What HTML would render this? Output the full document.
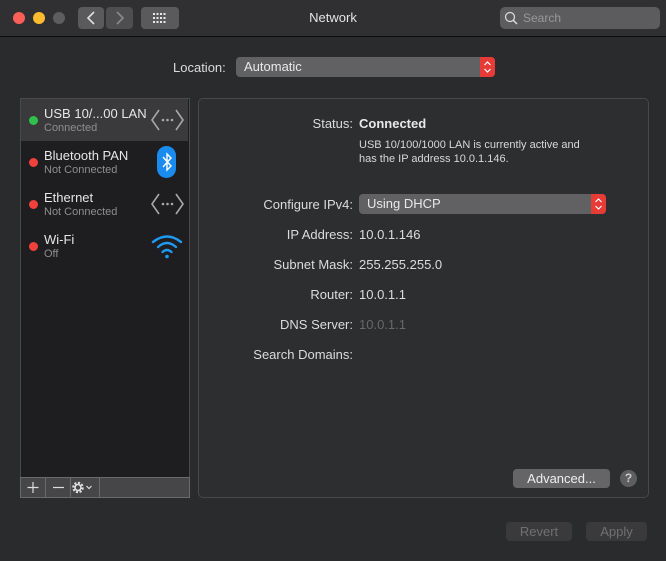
<!DOCTYPE html>
<html><head><style>
*{margin:0;padding:0;box-sizing:border-box}
body{width:666px;height:561px;background:#2a2b2d;font-family:"Liberation Sans",sans-serif;color:#dcdcdc;position:relative;overflow:hidden;font-size:13px}
.a{position:absolute}
.tb{left:0;top:0;width:666px;height:37px;background:#303032;border-bottom:1px solid #0c0c0c}
.dot{width:12px;height:12px;border-radius:50%;top:12px}
.btn{background:#5a5a5c;border-radius:4px}
.lbl{right:313px;text-align:right;white-space:nowrap}
.val{left:359px;white-space:nowrap}
.pop{background:#616163;border-radius:4px;height:20px;color:#e8e8e8;padding-left:8px;line-height:20px}
.pop .ar{position:absolute;right:0;top:0;width:15px;height:20px;background:#e63b36;border-radius:0 4px 4px 0}
.row{left:21px;width:167px;height:42px}
.sd{width:9px;height:9px;border-radius:50%;left:8px;top:17px}
.nm{left:23px;top:7px;font-size:13px;color:#e6e6e6}
.st{left:23px;top:23px;font-size:11px;color:#8e8e90}
</style></head><body>
<div class="a tb"></div>
<div class="a dot" style="left:13px;background:#fe5f57"></div>
<div class="a dot" style="left:33px;background:#febc2e"></div>
<div class="a dot" style="left:53px;background:#5d5d5f"></div>
<div class="a btn" style="left:78px;top:7px;width:26px;height:22px"></div>
<div class="a btn" style="left:106px;top:7px;width:27px;height:22px;background:#4e4e50"></div>
<svg class="a" style="left:78px;top:7px" width="56" height="22"><path d="M16 5 L10 11 L16 17" stroke="#e0e0e0" stroke-width="1.6" fill="none"/><path d="M116 5" /><path d="M39 5 L45 11 L39 17" stroke="#8a8a8c" stroke-width="1.6" fill="none"/></svg>
<div class="a btn" style="left:141px;top:7px;width:38px;height:22px"></div>
<svg class="a" style="left:152px;top:12px" width="16" height="12" fill="#e8e8e8"><g>
<rect x="1" y="1" width="2" height="2"/><rect x="4.5" y="1" width="2" height="2"/><rect x="8" y="1" width="2" height="2"/><rect x="11.5" y="1" width="2" height="2"/>
<rect x="1" y="5" width="2" height="2"/><rect x="4.5" y="5" width="2" height="2"/><rect x="8" y="5" width="2" height="2"/><rect x="11.5" y="5" width="2" height="2"/>
<rect x="1" y="9" width="2" height="2"/><rect x="4.5" y="9" width="2" height="2"/><rect x="8" y="9" width="2" height="2"/><rect x="11.5" y="9" width="2" height="2"/></g></svg>
<div class="a" style="left:0;width:666px;top:10px;text-align:center;font-size:13px;color:#e4e4e4">Network</div>
<div class="a" style="left:500px;top:7px;width:160px;height:22px;background:#5c5c5e;border-radius:5px"></div>
<svg class="a" style="left:504px;top:11px" width="14" height="14"><circle cx="6" cy="6" r="4.5" stroke="#d8d8d8" stroke-width="1.3" fill="none"/><path d="M9.3 9.3 L13 13" stroke="#d8d8d8" stroke-width="1.5"/></svg>
<div class="a" style="left:523px;top:11px;color:#98989a;font-size:12px">Search</div>

<div class="a" style="left:173px;top:60px;font-size:13px">Location:</div>
<div class="a pop" style="left:236px;top:57px;width:259px">Automatic<div class="ar"><svg width="15" height="20"><path d="M4.5 8 L7.5 5 L10.5 8 M4.5 12 L7.5 15 L10.5 12" stroke="#fff" stroke-width="1.2" fill="none"/></svg></div></div>

<div class="a" style="left:20px;top:98px;width:170px;height:400px;background:#1e1e20;border:1px solid #4a4a4c"></div>
<div class="a row" style="top:99px;background:#3a3a3c"><div class="a sd" style="background:#2ec24a"></div><div class="a nm">USB 10/...00 LAN</div><div class="a st">Connected</div></div>
<div class="a row" style="top:141px"><div class="a sd" style="background:#f2403a"></div><div class="a nm">Bluetooth PAN</div><div class="a st">Not Connected</div></div>
<div class="a row" style="top:183px"><div class="a sd" style="background:#f2403a"></div><div class="a nm">Ethernet</div><div class="a st">Not Connected</div></div>
<div class="a row" style="top:225px"><div class="a sd" style="background:#f2403a"></div><div class="a nm">Wi-Fi</div><div class="a st">Off</div></div>
<svg class="a" style="left:150px;top:108px" width="35" height="24"><path d="M9 2 L2 12 L9 22 M26 2 L33 12 L26 22" stroke="#a8a8aa" stroke-width="1.6" fill="none"/><circle cx="13" cy="12" r="1.3" fill="#a8a8aa"/><circle cx="17.5" cy="12" r="1.3" fill="#a8a8aa"/><circle cx="22" cy="12" r="1.3" fill="#a8a8aa"/></svg>
<svg class="a" style="left:150px;top:192px" width="35" height="24"><path d="M9 2 L2 12 L9 22 M26 2 L33 12 L26 22" stroke="#a8a8aa" stroke-width="1.6" fill="none"/><circle cx="13" cy="12" r="1.3" fill="#a8a8aa"/><circle cx="17.5" cy="12" r="1.3" fill="#a8a8aa"/><circle cx="22" cy="12" r="1.3" fill="#a8a8aa"/></svg>
<svg class="a" style="left:157px;top:146px" width="20" height="32"><rect x="0" y="0" width="19" height="32" rx="9.5" fill="#1a8cf0"/><path d="M6 11 L14 20 L10 24 L10 8 L14 12 L6 21" stroke="#fff" stroke-width="1.4" fill="none"/></svg>
<svg class="a" style="left:150px;top:233px" width="34" height="26"><g stroke="#1e9af5" stroke-width="2.4" fill="none" stroke-linecap="round"><path d="M3 9 Q17 -2 31 9"/><path d="M8 14 Q17 6 26 14"/><path d="M12.5 19 Q17 15 21.5 19"/></g><circle cx="17" cy="23.5" r="1.8" fill="#1e9af5"/></svg>

<div class="a" style="left:20px;top:477px;width:170px;height:21px;background:#464648;border:1px solid #6a6a6c"></div>
<div class="a" style="left:45px;top:478px;width:1px;height:19px;background:#6a6a6c"></div>
<div class="a" style="left:70px;top:478px;width:1px;height:19px;background:#6a6a6c"></div>
<div class="a" style="left:99px;top:478px;width:1px;height:19px;background:#6a6a6c"></div>
<svg class="a" style="left:21px;top:478px" width="80" height="19"><path d="M12 4 V15 M6.5 9.5 H17.5" stroke="#ddd" stroke-width="1.2"/><path d="M32 9.5 H43" stroke="#ddd" stroke-width="1.2"/><circle cx="57" cy="9.5" r="4.5" fill="none" stroke="#ddd" stroke-width="2.6" stroke-dasharray="2 1.5"/><circle cx="57" cy="9.5" r="3" fill="none" stroke="#ddd" stroke-width="1.6"/><path d="M65.5 8 L68 10.5 L70.5 8" stroke="#ddd" stroke-width="1.2" fill="none"/></svg>

<div class="a" style="left:198px;top:98px;width:451px;height:400px;background:#2d2e30;border:1px solid #48484a;border-radius:5px"></div>
<div class="a lbl" style="top:116px">Status:</div>
<div class="a val" style="top:116px;font-weight:bold;color:#e8e8e8">Connected</div>
<div class="a val" style="top:138px;font-size:11px;line-height:14px;color:#d8d8d8">USB 10/100/1000 LAN is currently active and<br>has the IP address 10.0.1.146.</div>
<div class="a lbl" style="top:197px">Configure IPv4:</div>
<div class="a pop" style="left:359px;top:194px;width:247px">Using DHCP<div class="ar"><svg width="15" height="20"><path d="M4.5 8 L7.5 5 L10.5 8 M4.5 12 L7.5 15 L10.5 12" stroke="#fff" stroke-width="1.2" fill="none"/></svg></div></div>
<div class="a lbl" style="top:227px">IP Address:</div><div class="a val" style="top:227px">10.0.1.146</div>
<div class="a lbl" style="top:257px">Subnet Mask:</div><div class="a val" style="top:257px">255.255.255.0</div>
<div class="a lbl" style="top:287px">Router:</div><div class="a val" style="top:287px">10.0.1.1</div>
<div class="a lbl" style="top:317px">DNS Server:</div><div class="a val" style="top:317px;color:#68686a">10.0.1.1</div>
<div class="a lbl" style="top:347px">Search Domains:</div>

<div class="a btn" style="left:513px;top:469px;width:97px;height:19px;background:#656567;text-align:center;line-height:19px;color:#eee">Advanced...</div>
<div class="a" style="left:620px;top:470px;width:17px;height:17px;border-radius:50%;background:#5e5e60;text-align:center;line-height:17px;font-size:12px;font-weight:bold;color:#ccc">?</div>
<div class="a btn" style="left:506px;top:522px;width:66px;height:19px;background:#3a3a3c;text-align:center;line-height:19px;color:#707072">Revert</div>
<div class="a btn" style="left:586px;top:522px;width:61px;height:19px;background:#3a3a3c;text-align:center;line-height:19px;color:#707072">Apply</div>
</body></html>
